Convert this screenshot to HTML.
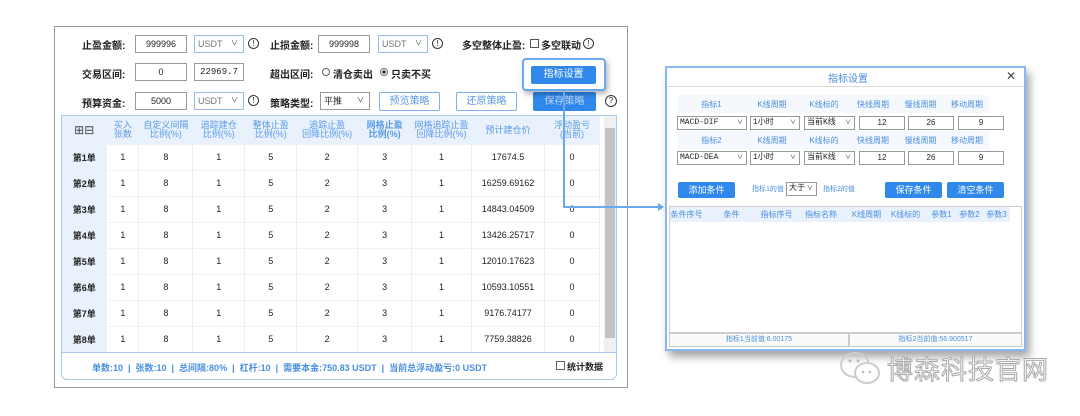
<!DOCTYPE html>
<html><head><meta charset="utf-8"><style>
*{margin:0;padding:0;box-sizing:border-box}
body{width:1080px;height:416px;background:#fff;position:relative;overflow:hidden;font-family:"Liberation Sans","Noto Sans CJK SC",sans-serif;font-size:10px;color:#222}
.a{position:absolute}
.lbl{font-weight:bold;font-size:10px;color:#222}
.in{position:absolute;border:1px solid #999;background:#fff;text-align:center;font-size:9px;line-height:16px;height:18px}
.sel{position:absolute;border:1px solid #9bbbe6;background:#fff;font-size:9px;line-height:16px;height:18px;padding-left:3px;color:#777}
.sel:after{content:"∨";position:absolute;right:5px;top:0;color:#444;font-size:7px}
.info{position:absolute;width:11px;height:11px;border:1px solid #333;border-radius:50%;font-size:8px;line-height:9px;text-align:center}
.btn{position:absolute;border:1px solid #7fb0ea;border-radius:2px;color:#5a9ae6;text-align:center;font-size:10px;line-height:17px;height:19px;background:#fff}
.bb{position:absolute;background:#2f88ea;color:#fff;text-align:center;font-size:10px;border-radius:2px}
table{border-collapse:collapse}
.t td{text-align:center;font-size:9px;border-right:1px solid #e9f1fb;border-bottom:1px solid #e9f1fb}
.dlg td{text-align:center;font-size:8px;color:#4a8fe0}
.dh td{background:#f5f8fc}
.ds{position:absolute;border:1px solid #999;background:#fff;font-size:8px;height:14px;line-height:12px;padding-left:2px;font-family:"Liberation Mono","Noto Sans CJK SC",monospace}
.ds:after{content:"∨";position:absolute;right:3px;top:0;font-size:6px}
.di{position:absolute;border:1px solid #999;background:#fff;font-size:8px;height:14px;line-height:12px;text-align:center}
</style></head><body>
<div class="a" style="left:54px;top:26px;width:574px;height:362px;border:1px solid #999;background:#fff"></div>
<div class="a lbl" style="left:82px;top:37px">止盈金额:</div>
<div class="in" style="left:135px;top:35px;width:52px">999996</div>
<div class="sel" style="left:194px;top:35px;width:50px">USDT</div>
<div class="info" style="left:248px;top:38px">!</div>
<div class="a lbl" style="left:270px;top:37px">止损金额:</div>
<div class="in" style="left:318px;top:35px;width:52px">999998</div>
<div class="sel" style="left:378px;top:35px;width:50px">USDT</div>
<div class="info" style="left:432px;top:38px">!</div>
<div class="a lbl" style="left:462px;top:37px">多空整体止盈:</div>
<div class="a" style="left:530px;top:39px;width:9px;height:9px;border:1px solid #555"></div>
<div class="a lbl" style="left:541px;top:37px">多空联动</div>
<div class="info" style="left:583px;top:38px">!</div>
<div class="a lbl" style="left:82px;top:66px">交易区间:</div>
<div class="in" style="left:135px;top:63px;width:52px">0</div>
<div class="in" style="left:194px;top:63px;width:50px;font-family:'Liberation Mono',monospace">22969.7</div>
<div class="a lbl" style="left:270px;top:66px">超出区间:</div>
<div class="a" style="left:322px;top:68px;width:8px;height:8px;border:1px solid #666;border-radius:50%"></div>
<div class="a lbl" style="left:333px;top:66px">清仓卖出</div>
<div class="a" style="left:380px;top:68px;width:8px;height:8px;border:1px solid #666;border-radius:50%;background:radial-gradient(#222 35%,#fff 45%)"></div>
<div class="a lbl" style="left:391px;top:66px">只卖不买</div>
<div class="a lbl" style="left:82px;top:95px">预算资金:</div>
<div class="in" style="left:135px;top:92px;width:52px">5000</div>
<div class="sel" style="left:194px;top:92px;width:50px">USDT</div>
<div class="info" style="left:248px;top:95px">!</div>
<div class="a lbl" style="left:270px;top:95px">策略类型:</div>
<div class="in" style="left:320px;top:92px;width:50px;text-align:left;padding-left:3px;color:#222">平推<span style="position:absolute;right:5px;top:0;font-size:7px">∨</span></div>
<div class="btn" style="left:379px;top:92px;width:61px">预览策略</div>
<div class="btn" style="left:456px;top:92px;width:61px">还原策略</div>
<div class="bb" style="left:533px;top:92px;width:63px;height:19px;line-height:19px;color:#bcd6f6">保存策略</div>
<div class="info" style="left:605px;top:95px;width:12px;height:12px;line-height:10px">?</div>
<div class="a" style="left:61px;top:115px;width:556px;height:265px;border:1px solid #a9c8ee;border-radius:0 0 6px 6px;background:#fff"></div>
<table class="a t" style="left:62px;top:116px;width:538px">
<tr style="height:28px;background:#e8f1fc;color:#5a9ae6">
<td style="width:45px;color:#444;font-size:12px">⊞⊟</td><td style="width:32px;line-height:9px">买入<br>张数</td><td style="width:54px;line-height:9px">自定义间隔<br>比例(%)</td><td style="width:52px;line-height:9px">追踪建仓<br>比例(%)</td><td style="width:52px;line-height:9px">整体止盈<br>比例(%)</td><td style="width:61px;line-height:9px">追踪止盈<br>回降比例(%)</td><td style="width:54px;line-height:9px;font-weight:bold">网格止盈<br>比例(%)</td><td style="width:60px;line-height:9px">网格追踪止盈<br>回降比例(%)</td><td style="width:73px">预计建仓价</td><td style="width:55px;line-height:9px">浮动盈亏<br>(当前)</td></tr>
<tr style="height:26px"><td style="background:#e8f1fc;font-weight:bold">第1单</td><td>1</td><td>8</td><td>1</td><td>5</td><td>2</td><td>3</td><td>1</td><td>17674.5</td><td>0</td></tr>
<tr style="height:26px"><td style="background:#e8f1fc;font-weight:bold">第2单</td><td>1</td><td>8</td><td>1</td><td>5</td><td>2</td><td>3</td><td>1</td><td>16259.69162</td><td>0</td></tr>
<tr style="height:26px"><td style="background:#e8f1fc;font-weight:bold">第3单</td><td>1</td><td>8</td><td>1</td><td>5</td><td>2</td><td>3</td><td>1</td><td>14843.04509</td><td>0</td></tr>
<tr style="height:26px"><td style="background:#e8f1fc;font-weight:bold">第4单</td><td>1</td><td>8</td><td>1</td><td>5</td><td>2</td><td>3</td><td>1</td><td>13426.25717</td><td>0</td></tr>
<tr style="height:26px"><td style="background:#e8f1fc;font-weight:bold">第5单</td><td>1</td><td>8</td><td>1</td><td>5</td><td>2</td><td>3</td><td>1</td><td>12010.17623</td><td>0</td></tr>
<tr style="height:26px"><td style="background:#e8f1fc;font-weight:bold">第6单</td><td>1</td><td>8</td><td>1</td><td>5</td><td>2</td><td>3</td><td>1</td><td>10593.10551</td><td>0</td></tr>
<tr style="height:26px"><td style="background:#e8f1fc;font-weight:bold">第7单</td><td>1</td><td>8</td><td>1</td><td>5</td><td>2</td><td>3</td><td>1</td><td>9176.74177</td><td>0</td></tr>
<tr style="height:26px"><td style="background:#e8f1fc;font-weight:bold">第8单</td><td>1</td><td>8</td><td>1</td><td>5</td><td>2</td><td>3</td><td>1</td><td>7759.38826</td><td>0</td></tr>
</table>
<div class="a" style="left:604px;top:116px;width:12px;height:236px;background:#f0f0f0"></div>
<div class="a" style="left:605px;top:128px;width:10px;height:210px;background:#c2c2c2"></div>
<div class="a" style="left:61px;top:352px;width:556px;height:1px;background:#a9c8ee"></div>
<div class="a" style="left:92px;top:361px;color:#4a8fe0;font-size:9px;font-weight:bold;white-space:pre">单数:10  |  张数:10  |  总间隔:80%  |  杠杆:10  |  需要本金:750.83 USDT  |  当前总浮动盈亏:0 USDT</div>
<div class="a" style="left:556px;top:361px;width:9px;height:9px;border:1px solid #666"></div>
<div class="a lbl" style="left:567px;top:360px;font-size:9px">统计数据</div>
<div class="a" style="left:522px;top:58px;width:84px;height:33px;border:2px solid #6aa8ee;border-radius:4px;background:#fff;box-shadow:2px 3px 6px rgba(0,0,0,.3)"></div>
<div class="bb" style="left:531px;top:66px;width:65px;height:18px;line-height:18px">指标设置</div>
<div class="a" style="left:563px;top:91px;width:2px;height:117px;background:#6aa8ee"></div>
<div class="a" style="left:563px;top:206px;width:97px;height:2px;background:#6aa8ee"></div>
<div class="a" style="left:658px;top:203px;width:0;height:0;border-left:6px solid #6aa8ee;border-top:4px solid transparent;border-bottom:4px solid transparent"></div>
<div class="a" style="left:665px;top:66px;width:361px;height:285px;border:2px solid #8ab8ee;background:#fff;box-shadow:4px 6px 8px rgba(0,0,0,.35)"></div>
<div class="a" style="left:667px;top:86px;width:357px;height:1px;background:#ddd"></div>
<div class="a" style="left:828px;top:70px;color:#4a8fe0;font-size:10px">指标设置</div>
<div class="a" style="left:1006px;top:69px;font-size:12px;color:#444">✕</div>
<table class="a dlg dh" style="left:677px;top:95px;border-spacing:2px 0">
<tr style="height:18px"><td style="width:69px">指标1</td><td style="width:52px">K线周期</td><td style="width:52px">K线标的</td><td style="width:46px">快线周期</td><td style="width:49px">慢线周期</td><td style="width:44px">移动周期</td></tr>
</table>
<div class="ds" style="left:677px;top:116px;width:70px">MACD-DIF</div>
<div class="ds" style="left:750px;top:116px;width:50px">1小时</div>
<div class="ds" style="left:804px;top:116px;width:51px">当前K线</div>
<div class="di" style="left:859px;top:116px;width:46px">12</div>
<div class="di" style="left:908px;top:116px;width:46px">26</div>
<div class="di" style="left:958px;top:116px;width:46px">9</div>
<table class="a dlg dh" style="left:677px;top:131px;border-spacing:2px 0">
<tr style="height:18px"><td style="width:69px">指标2</td><td style="width:52px">K线周期</td><td style="width:52px">K线标的</td><td style="width:46px">快线周期</td><td style="width:49px">慢线周期</td><td style="width:44px">移动周期</td></tr>
</table>
<div class="ds" style="left:677px;top:151px;width:70px">MACD-DEA</div>
<div class="ds" style="left:750px;top:151px;width:50px">1小时</div>
<div class="ds" style="left:804px;top:151px;width:51px">当前K线</div>
<div class="di" style="left:859px;top:151px;width:46px">12</div>
<div class="di" style="left:908px;top:151px;width:46px">26</div>
<div class="di" style="left:958px;top:151px;width:46px">9</div>
<div class="bb" style="left:678px;top:182px;width:57px;height:16px;line-height:16px;font-size:9px">添加条件</div>
<div class="a" style="left:752px;top:184px;color:#4a8fe0;font-size:7px">指标1的值</div>
<div class="ds" style="left:786px;top:182px;width:31px;height:14px">大于</div>
<div class="a" style="left:823px;top:184px;color:#4a8fe0;font-size:7px">指标2的值</div>
<div class="bb" style="left:885px;top:182px;width:57px;height:16px;line-height:16px;font-size:9px">保存条件</div>
<div class="bb" style="left:947px;top:182px;width:57px;height:16px;line-height:16px;font-size:9px">清空条件</div>
<div class="a" style="left:669px;top:206px;width:353px;height:127px;border:1px solid #ccc"></div>
<table class="a dlg" style="left:670px;top:207px;border-spacing:1px;background:#fff">
<tr style="height:15px;background:#e8f1fc"><td style="width:33px">条件序号</td><td style="width:57px">条件</td><td style="width:33px">指标序号</td><td style="width:56px">指标名称</td><td style="width:35px">K线周期</td><td style="width:43px">K线标的</td><td style="width:29px">参数1</td><td style="width:27px">参数2</td><td style="width:27px">参数3</td></tr>
</table>
<div class="a" style="left:669px;top:333px;width:180px;height:14px;border:1px solid #ccc;background:#fafafa;color:#4a8fe0;font-size:7px;text-align:center;line-height:12px">指标1当前值:6.00175</div>
<div class="a" style="left:849px;top:333px;width:173px;height:14px;border:1px solid #ccc;background:#fafafa;color:#4a8fe0;font-size:7px;text-align:center;line-height:12px">指标2当前值:56.900517</div>
<svg class="a" style="left:838px;top:350px" width="48" height="36"><ellipse cx="17" cy="15" rx="14" ry="12" fill="none" stroke="#ccc" stroke-width="2"/><ellipse cx="29" cy="23" rx="12" ry="10" fill="#fff" stroke="#ccc" stroke-width="2"/><circle cx="12" cy="11" r="1.5" fill="#bbb"/><circle cx="20" cy="11" r="1.5" fill="#bbb"/><circle cx="25" cy="22" r="1.3" fill="#bbb"/><circle cx="32" cy="22" r="1.3" fill="#bbb"/></svg>
<div class="a" style="left:887px;top:350px;font-size:26px;color:#fff;-webkit-text-stroke:1px #aaa;letter-spacing:1px">博森科技官网</div>
</body></html>
